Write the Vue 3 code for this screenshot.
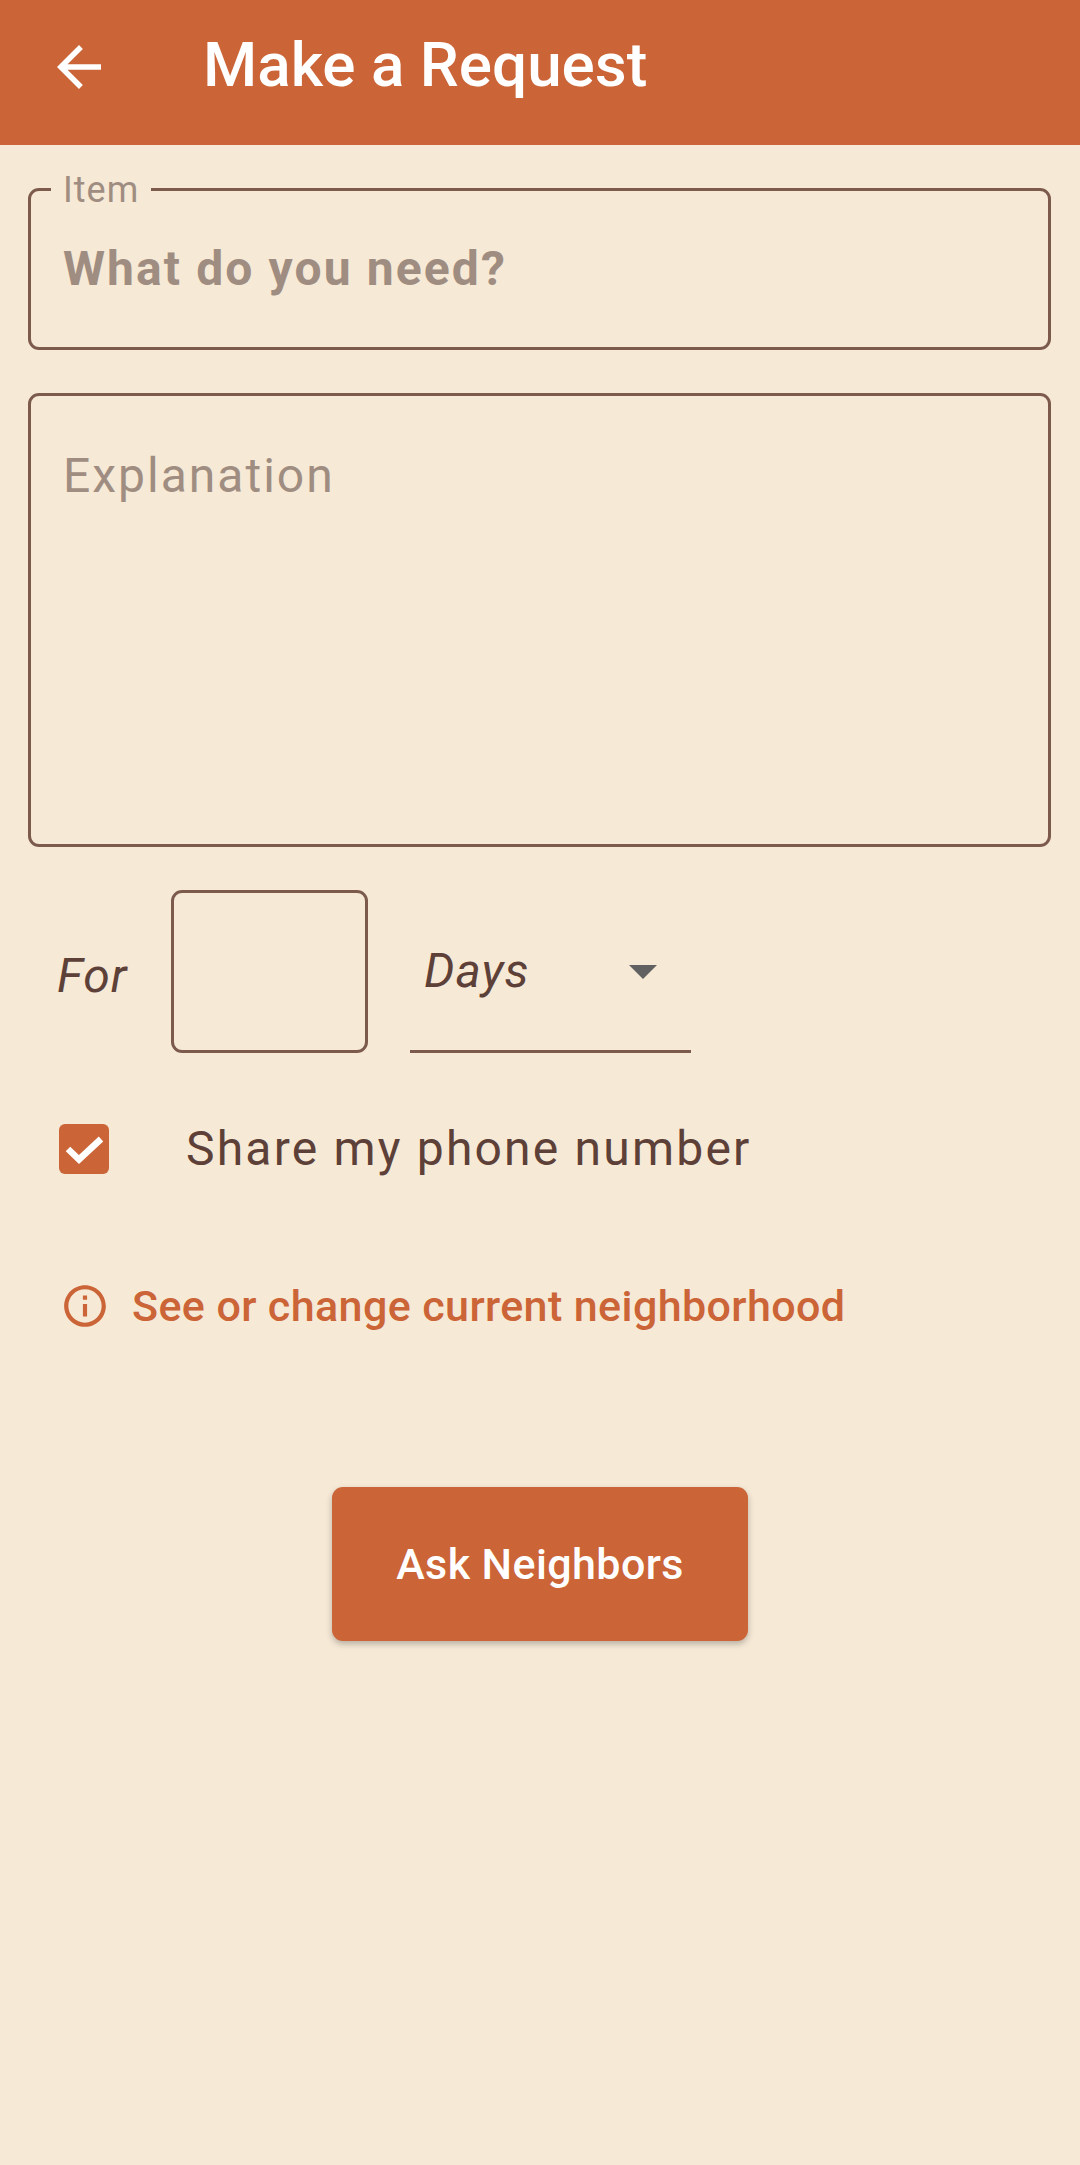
<template>
  <div class="screen">
    <header class="app-bar">
      <svg class="back" viewBox="0 0 24 24" aria-hidden="true">
        <path d="M20 11H7.83l5.59-5.59L12 4l-8 8 8 8 1.41-1.41L7.83 13H20v-2z" />
      </svg>
      <h1 class="title">Make a Request</h1>
    </header>

    <main class="form">
      <div class="field field-item">
        <span class="float-label">Item</span>
        <span class="placeholder bold">What do you need?</span>
      </div>

      <div class="field field-explain">
        <span class="placeholder">Explanation</span>
      </div>

      <div class="duration">
        <span class="for">For</span>
        <div class="field field-count"></div>
        <div class="select">
          <span class="select-value">Days</span>
          <span class="caret"></span>
        </div>
      </div>

      <label class="share">
        <span class="check">
          <svg viewBox="0 0 50 50" aria-hidden="true">
            <path d="M9 25l11 10.5L42 15" />
          </svg>
        </span>
        <span class="share-text">Share my phone number</span>
      </label>

      <a class="hood">
        <svg class="info" viewBox="0 0 24 24" aria-hidden="true">
          <path d="M11 7h2v2h-2zm0 4h2v6h-2zm1-9C6.48 2 2 6.48 2 12s4.48 10 10 10 10-4.48 10-10S17.52 2 12 2zm0 18c-4.41 0-8-3.59-8-8s3.59-8 8-8 8 3.59 8 8-3.59 8-8 8z" />
        </svg>
        <span>See or change current neighborhood</span>
      </a>

      <button class="ask" type="button">Ask Neighbors</button>
    </main>
  </div>
</template>

<script setup>
</script>

<style>
html, body { margin: 0; background: #f6e9d6; }
</style>

<style scoped>
.screen {
  width: 1080px;
  height: 2165px;
  background: #f6e9d6;
  font-family: Roboto, "Liberation Sans", sans-serif;
  color: #5d4037;
  overflow: hidden;
}

.app-bar {
  height: 145px;
  box-sizing: border-box;
  background: #cb6436;
  display: flex;
  align-items: flex-start;
  padding: 34px 0 0 46px;
}
.back { width: 66px; height: 66px; fill: #fff; flex-shrink: 0; }
.title {
  margin: -1px 0 0 91px;
  font-size: 62px;
  line-height: 64px;
  font-weight: 500;
  color: #fff;
}

.form { padding: 43px 29px 0 28px; }

.field {
  position: relative;
  box-sizing: border-box;
  border: 3px solid #7c5b4d;
  border-radius: 11px;
}
.field-item { height: 162px; padding: 50px 32px 0; }
.field-explain { height: 454px; margin-top: 43px; padding: 52px 32px 0; }

.float-label {
  position: absolute;
  left: 20px;
  top: -22px;
  padding: 0 12px;
  background: #f6e9d6;
  font-size: 36px;
  line-height: 42px;
  letter-spacing: 1px;
  color: #a08d81;
}

.placeholder {
  font-size: 48px;
  line-height: 56px;
  letter-spacing: 2px;
  color: #a08d81;
}
.bold { font-weight: 700; letter-spacing: 2.1px; }

.duration {
  display: flex;
  align-items: stretch;
  height: 163px;
  margin-top: 43px;
}
.for {
  width: 143px;
  padding: 8px 0 0 29px;
  box-sizing: border-box;
  align-self: center;
  font-size: 48px;
  font-style: italic;
  letter-spacing: 1px;
}
.field-count { width: 197px; }
.select {
  width: 281px;
  margin-left: 42px;
  box-sizing: border-box;
  border-bottom: 3px solid #7c5b4d;
  display: flex;
  align-items: center;
  padding: 0 34px 0 14px;
  justify-content: space-between;
}
.select-value {
  font-size: 48px;
  font-style: italic;
  letter-spacing: 1px;
}
.caret {
  width: 0;
  height: 0;
  margin-top: 4px;
  border-left: 14px solid transparent;
  border-right: 14px solid transparent;
  border-top: 14px solid #616161;
}

.share {
  display: flex;
  align-items: flex-start;
  margin: 71px 0 0 31px;
  height: 51px;
}
.check {
  width: 50px;
  height: 50px;
  border-radius: 6px;
  background: #cb6436;
  flex-shrink: 0;
}
.check svg { display: block; width: 50px; height: 50px; }
.check path { fill: none; stroke: #fff; stroke-width: 6.5; }
.share-text {
  margin-left: 77px;
  font-size: 48px;
  line-height: 50px;
  letter-spacing: 2.2px;
}

.hood {
  display: flex;
  align-items: center;
  margin: 106px 0 0 32px;
  font-size: 43px;
  line-height: 48px;
  font-weight: 500;
  letter-spacing: 0.4px;
  color: #cb6436;
}
.info { width: 50px; height: 50px; fill: #cb6436; flex-shrink: 0; margin-right: 22px; }

.ask {
  display: block;
  width: 416px;
  height: 154px;
  margin: 156px 0 0 304px;
  border: 0;
  border-radius: 11px;
  background: #cb6436;
  color: #fff;
  font-family: inherit;
  font-size: 43px;
  font-weight: 500;
  letter-spacing: 0.4px;
  box-shadow: 0 3px 6px rgba(0, 0, 0, 0.25);
}
</style>
